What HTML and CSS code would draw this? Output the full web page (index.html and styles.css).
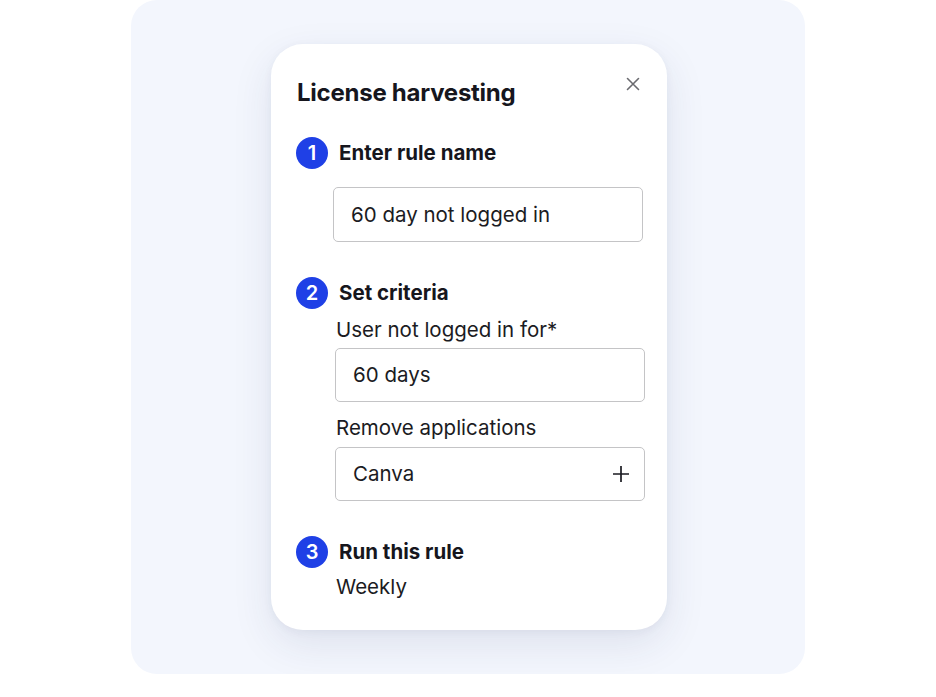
FILE: index.html
```html
<!DOCTYPE html>
<html>
<head>
<meta charset="utf-8">
<title>License harvesting</title>
<link rel="stylesheet" href="styles.css">
</head>
<body>

<div class="backdrop">
  <div class="dialog">

    <div class="dialog-head">
      <h1 class="dialog-title">License harvesting</h1>
      <button class="close" aria-label="Close">
        <svg width="14" height="14" viewBox="0 0 14 14"><path d="M1.5,1.5L12.5,12.5M12.5,1.5L1.5,12.5" stroke="#6b6b70" stroke-width="1.6" stroke-linecap="round" fill="none"/></svg>
      </button>
    </div>

    <div class="step">
      <div class="step-head"><span class="num">1</span><span class="step-name">Enter rule name</span></div>
      <div class="step-body">
        <div class="field first">60 day not logged in</div>
      </div>
    </div>

    <div class="step">
      <div class="step-head"><span class="num">2</span><span class="step-name">Set criteria</span></div>
      <div class="step-body">
        <div class="label">User not logged in for*</div>
        <div class="field">60 days</div>
        <div class="label second">Remove applications</div>
        <div class="field with-icon">
          <span>Canva</span>
          <svg class="plus" width="18" height="18" viewBox="0 0 18 18"><path d="M9,1L9,17M1,9L17,9" stroke="#1b1b22" stroke-width="1.7" fill="none"/></svg>
        </div>
      </div>
    </div>

    <div class="step">
      <div class="step-head"><span class="num">3</span><span class="step-name">Run this rule</span></div>
      <div class="step-body">
        <div class="label plain">Weekly</div>
      </div>
    </div>

  </div>
</div>

</body>
</html>
```

FILE: styles.css
```css
body {
  margin: 0;
  background: #ffffff;
  font-family: Inter, "Noto Sans", sans-serif;
  color: #16161d;
}

.backdrop {
  margin-left: 131px;
  width: 674px;
  height: 674px;
  border-radius: 26px;
  background: #f3f6fd;
  display: flex;
  align-items: center;
  justify-content: center;
}

.dialog {
  width: 396px;
  box-sizing: border-box;
  margin-left: 2px;
  padding: 33px 22px 31px 26px;
  background: #ffffff;
  border-radius: 32px;
  box-shadow: 0 14px 40px rgba(40, 50, 100, 0.10), 0 2px 8px rgba(40, 50, 100, 0.05);
}

.dialog-head {
  display: flex;
  justify-content: space-between;
  align-items: flex-start;
}

.dialog-title {
  margin: 0;
  font-size: 24px;
  line-height: 32px;
  font-weight: 700;
  letter-spacing: -0.25px;
}

.close {
  border: 0;
  background: none;
  padding: 0;
  margin: 0 5px 0 0;
  width: 14px;
  height: 14px;
  cursor: pointer;
}

.step {
  margin-top: 28px;
}

.step + .step {
  margin-top: 35px;
}

.step-head {
  display: flex;
  align-items: center;
  height: 32px;
}

.num {
  width: 32px;
  height: 32px;
  border-radius: 50%;
  background: #1f40e6;
  color: #fff;
  font-size: 20px;
  font-weight: 600;
  line-height: 32px;
  text-align: center;
  margin-left: -1px;
}

.step-name {
  margin-left: 11px;
  font-size: 20.5px;
  line-height: 32px;
  font-weight: 700;
}

.step-body {
  margin-left: 38px;
}

.field {
  height: 54px;
  box-sizing: border-box;
  border: 1px solid #c4c4c6;
  border-radius: 5px;
  padding: 0 14px 0 17px;
  display: flex;
  align-items: center;
  justify-content: space-between;
  font-size: 20.5px;
  line-height: 24px;
  color: #1b1b22;
}

.field.first {
  height: 55px;
  margin: 18px 2px 0 -2px;
}

.label {
  margin-top: 9px;
  margin-bottom: 6px;
  margin-left: 1px;
  font-size: 20.5px;
  line-height: 24px;
  color: #1b1b22;
}

.label.second {
  margin-top: 14px;
  margin-bottom: 7px;
}

.label.plain {
  margin-top: 7px;
  margin-bottom: 0;
}

.plus {
  display: block;
}
```
